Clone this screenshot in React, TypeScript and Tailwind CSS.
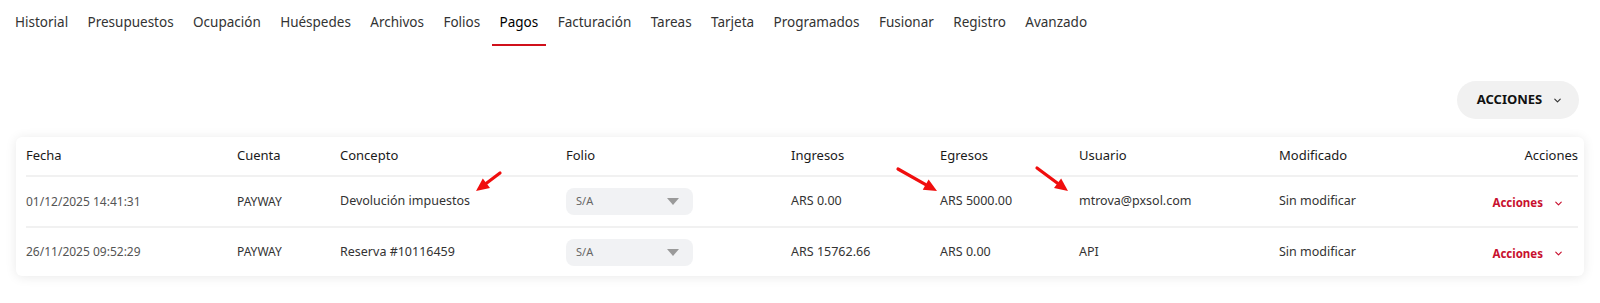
import React from "react";
import { ChevronDown } from "lucide-react";

const tabs = [
  "Historial",
  "Presupuestos",
  "Ocupación",
  "Huéspedes",
  "Archivos",
  "Folios",
  "Pagos",
  "Facturación",
  "Tareas",
  "Tarjeta",
  "Programados",
  "Fusionar",
  "Registro",
  "Avanzado",
];

const rows = [
  {
    fecha: "01/12/2025 14:41:31",
    cuenta: "PAYWAY",
    concepto: "Devolución impuestos",
    ingresos: "ARS 0.00",
    egresos: "ARS 5000.00",
    usuario: "mtrova@pxsol.com",
    mod: "Sin modificar",
  },
  {
    fecha: "26/11/2025 09:52:29",
    cuenta: "PAYWAY",
    concepto: "Reserva #10116459",
    ingresos: "ARS 15762.66",
    egresos: "ARS 0.00",
    usuario: "API",
    mod: "Sin modificar",
  },
];

const grid =
  "grid grid-cols-[211px_103px_226px_225px_149px_139px_200px_200px_1fr] items-center";

function Arrow({ x1, y1, x2, y2 }: { x1: number; y1: number; x2: number; y2: number }) {
  const dx = x2 - x1;
  const dy = y2 - y1;
  const len = Math.hypot(dx, dy);
  const ux = dx / len;
  const uy = dy / len;
  const head = 13;
  const hw = 6;
  const bx = x2 - ux * head;
  const by = y2 - uy * head;
  const px = -uy;
  const py = ux;
  return (
    <g>
      <line x1={x1} y1={y1} x2={bx} y2={by} stroke="#f00d0d" strokeWidth={3.2} strokeLinecap="round" />
      <polygon
        points={`${x2},${y2} ${bx + px * hw},${by + py * hw} ${bx - px * hw},${by - py * hw}`}
        fill="#f00d0d"
      />
    </g>
  );
}

export default function App() {
  return (
    <div className="relative w-[1600px] h-[303px] bg-white font-['Noto_Sans',sans-serif] overflow-hidden">
      <nav className="flex items-start pl-[7px] gap-[3.4px]">
        {tabs.map((t) => (
          <div key={t} className="flex flex-col">
            <div
              className={`h-[44px] px-2 flex items-center text-[13.5px] ${
                t === "Pagos" ? "text-[#000]" : "text-[#333]"
              }`}
            >
              {t}
            </div>
            <div className={`h-[2px] ${t === "Pagos" ? "bg-[#d0101b]" : "bg-transparent"}`} />
          </div>
        ))}
      </nav>

      <div className="flex justify-end pr-[21px] mt-[35px]">
        <button className="h-[38px] w-[122px] rounded-full bg-[#f1f1f1] flex items-center justify-center gap-[10px] pl-[4px] text-[13px] font-bold text-[#111]">
          ACCIONES
          <ChevronDown size={11} strokeWidth={2.5} className="text-[#333]" />
        </button>
      </div>

      <div className="mx-4 mt-[18px] rounded-md bg-white shadow-[0_1px_12px_rgba(0,0,0,0.09)] pl-[10px] pr-[6px]">
        <div className={`${grid} h-[38px] text-[13px] text-[#1a1a1a]`}>
          <div>Fecha</div>
          <div>Cuenta</div>
          <div>Concepto</div>
          <div>Folio</div>
          <div>Ingresos</div>
          <div>Egresos</div>
          <div>Usuario</div>
          <div>Modificado</div>
          <div className="text-right">Acciones</div>
        </div>
        {rows.map((r, i) => (
          <div
            key={i}
            className={`${grid} border-t-2 border-[#f1f1f1] ${i === 0 ? "h-[51px]" : "h-[50px]"} text-[12.5px] text-[#333]`}
          >
            <div className="text-[#555] text-[12px]">{r.fecha}</div>
            <div className="text-[12px]">{r.cuenta}</div>
            <div>{r.concepto}</div>
            <div>
              <div className="w-[127px] h-[27px] rounded-lg bg-[#f1f2f4] flex items-center justify-between pl-[10px] pr-[14px]">
                <span className="text-[11px] text-[#666]">S/A</span>
                <span className="w-0 h-0 border-l-[6px] border-r-[6px] border-t-[7px] border-l-transparent border-r-transparent border-t-[#9a9a9a]" />
              </div>
            </div>
            <div>{r.ingresos}</div>
            <div>{r.egresos}</div>
            <div>{r.usuario}</div>
            <div>{r.mod}</div>
            <div className="flex justify-end pr-[14px] pt-[3px]">
              <span className="flex items-center gap-[10px] text-[11.5px] font-bold text-[#c8102e]">
                Acciones
                <ChevronDown size={11} strokeWidth={2.5} />
              </span>
            </div>
          </div>
        ))}
      </div>

      <svg className="absolute left-0 top-0 pointer-events-none" width={1600} height={303}>
        <Arrow x1={500} y1={173} x2={476} y2={191} />
        <Arrow x1={898} y1={169} x2={937} y2={191} />
        <Arrow x1={1037} y1={168} x2={1068} y2={191} />
      </svg>
    </div>
  );
}
